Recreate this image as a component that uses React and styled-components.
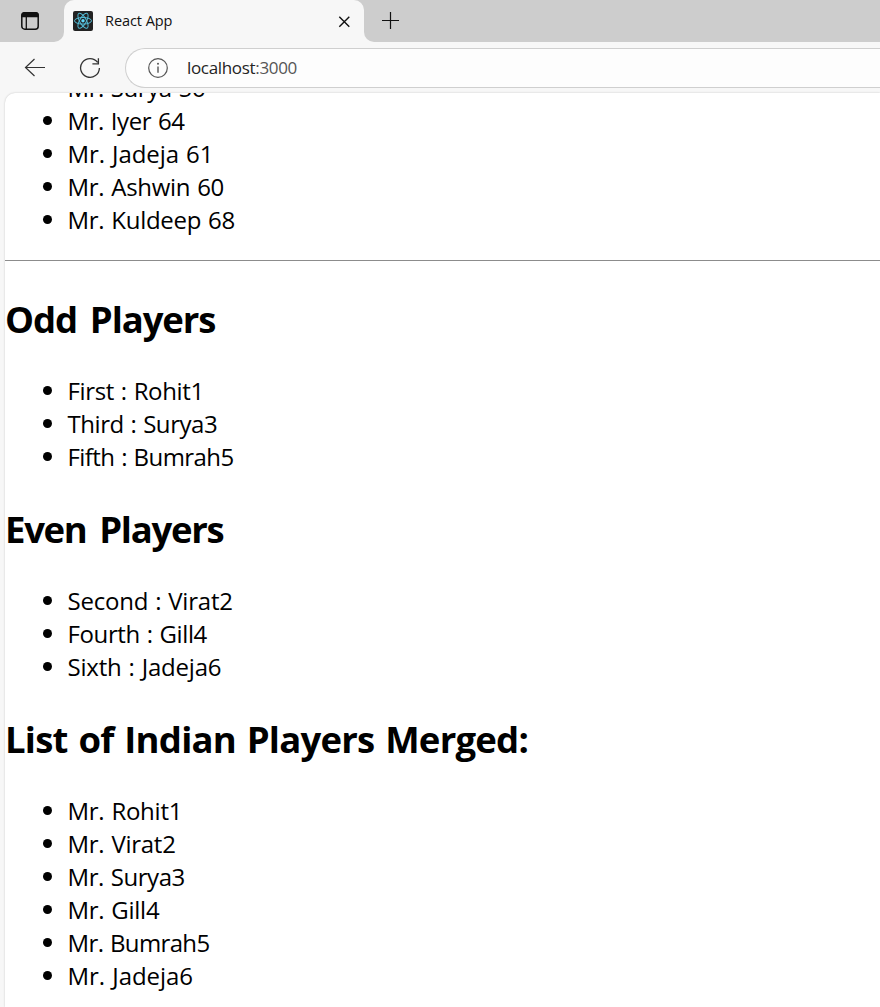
import React from 'react';
import styled, { createGlobalStyle } from 'styled-components';

const GlobalStyle = createGlobalStyle`
  * { box-sizing: border-box; }
  html, body { margin: 0; background: #f7f7f7; }
  body { font-family: "Open Sans", "Noto Sans", sans-serif; color: #000; overflow: hidden; }
`;

const Window = styled.div`
  display: flex;
  flex-direction: column;
  height: 1007px;
  background: #f7f7f7;
  overflow: hidden;
`;

const TabStrip = styled.header`
  display: flex;
  height: 42px;
  flex: none;
`;

const StripStart = styled.div`
  width: 64px;
  padding: 11px 0 0 20px;
  background: #cdcdcd;
  border-bottom-right-radius: 10px;
`;

const TabSlot = styled.div`
  width: 300px;
  background: linear-gradient(#cdcdcd 50%, #f7f7f7 50%);
`;

const Tab = styled.div`
  display: flex;
  align-items: center;
  height: 42px;
  padding: 0 13px 0 9px;
  background: #f7f7f7;
  border-radius: 10px 10px 0 0;
`;

const TabTitle = styled.span`
  flex: 1;
  margin-left: 12px;
  font-size: 14.5px;
  line-height: 20px;
  letter-spacing: -0.06px;
  color: #111;
`;

const StripEnd = styled.div`
  flex: 1;
  padding: 11px 0 0 17px;
  background: #cdcdcd;
  border-bottom-left-radius: 10px;
`;

const Toolbar = styled.nav`
  display: flex;
  align-items: flex-start;
  height: 51px;
  flex: none;
  padding: 6px 0 0 24px;
`;

const ToolIcon = styled.span`
  display: flex;
  width: 22px;
  height: 40px;
  align-items: center;
  margin-right: ${(p) => p.$gap}px;
`;

const AddressBar = styled.div`
  display: flex;
  align-items: center;
  flex: 1;
  height: 40px;
  padding-left: 21px;
  background: #fdfdfd;
  border: 1px solid #cfcfcf;
  border-right: 0;
  border-radius: 20px 0 0 20px;
`;

const Url = styled.span`
  margin-left: 18px;
  font-size: 17px;
  line-height: 24px;
  letter-spacing: -0.33px;
  color: #242424;
`;

const Port = styled.span`
  color: #555;
`;

const Page = styled.main`
  flex: 1;
  min-height: 0;
  margin-left: 5px;
  background: #fff;
  border-radius: 10px 0 0 0;
  box-shadow: 0 0 2px rgba(0, 0, 0, 0.22);
  overflow: hidden;
`;

const PlayerList = styled.ul`
  margin: ${(p) => (p.$scrolled ? '-22px' : '0')} 0 0;
  padding: 0 0 0 38px;
  list-style: none;
`;

const Player = styled.li`
  display: flex;
  align-items: center;
  height: 33px;
  font-size: 24px;
  line-height: 33px;
  letter-spacing: ${(p) => p.$spacing}px;
  word-spacing: 1px;
  white-space: pre;

  &::before {
    content: '';
    width: 9px;
    height: 9px;
    margin-right: 15.5px;
    border-radius: 50%;
    background: #000;
  }
`;

const Divider = styled.hr`
  height: 1px;
  margin: 24px 0 32px;
  border: 0;
  background: #8c8c8c;
`;

const Heading = styled.h2`
  margin: ${(p) => p.$top}px 0 30px;
  padding-top: 1px;
  font-size: 36.5px;
  font-weight: 700;
  line-height: 50px;
  letter-spacing: ${(p) => p.$spacing}px;
  word-spacing: ${(p) => p.$wordSpacing}px;
  white-space: nowrap;
`;

const TabActionsIcon = () => (
  <svg width="20" height="20" viewBox="0 0 20 20" display="block">
    <rect x="1.8" y="1.8" width="16.4" height="16.4" rx="3" fill="none" stroke="#111" strokeWidth="1.5" />
    <path d="M1.2 6.2V4.4a3.3 3.3 0 0 1 3.3-3.3h11a3.3 3.3 0 0 1 3.3 3.3v1.8z" fill="#111" />
    <path d="M6.3 6v12" stroke="#111" strokeWidth="1.3" />
  </svg>
);

const ReactLogo = () => (
  <svg width="20" height="20" viewBox="0 0 20 20">
    <rect width="20" height="20" rx="2" fill="#222" />
    <g fill="none" stroke="#53bcd6" strokeWidth="1">
      <ellipse cx="10" cy="9.8" rx="8.5" ry="3.3" />
      <ellipse cx="10" cy="9.8" rx="8.5" ry="3.3" transform="rotate(60 10 9.8)" />
      <ellipse cx="10" cy="9.8" rx="8.5" ry="3.3" transform="rotate(120 10 9.8)" />
    </g>
    <circle cx="10" cy="9.8" r="1.7" fill="#61dafb" />
  </svg>
);

const CloseIcon = () => (
  <svg width="14" height="14" viewBox="0 0 14 14">
    <path d="M2.3 2.7l10 10m0-10l-10 10" stroke="#111" strokeWidth="1.4" fill="none" />
  </svg>
);

const PlusIcon = () => (
  <svg width="20" height="20" viewBox="0 0 20 20" display="block">
    <path d="M1 9.5h17M9.5 1v17" stroke="#111" strokeWidth="1.2" fill="none" />
  </svg>
);

const BackIcon = () => (
  <svg width="22" height="22" viewBox="0 0 22 22">
    <path d="M21 10.5H1.5M10.5 2L1.5 10.5l9 8.5" stroke="#333" strokeWidth="1.2" fill="none" />
  </svg>
);

const RefreshIcon = () => (
  <svg width="22" height="22" viewBox="0 0 22 22">
    <path d="M20.4 11A9.4 9.4 0 1 1 18.6 5.4M19.4 1.2v5.6h-6" stroke="#333" strokeWidth="1.3" fill="none" />
  </svg>
);

const InfoIcon = () => (
  <svg width="22" height="22" viewBox="0 0 22 22">
    <circle cx="11" cy="11" r="9.3" fill="none" stroke="#555" strokeWidth="1.2" />
    <path d="M11 9.4v6.3" stroke="#555" strokeWidth="1.4" />
    <circle cx="11" cy="6.7" r="1" fill="#555" />
  </svg>
);

const runs = [
  ['Mr. Surya 56', -0.42],
  ['Mr. Iyer 64', -0.41],
  ['Mr. Jadeja 61', -0.08],
  ['Mr. Ashwin 60', -0.29],
  ['Mr. Kuldeep 68', -0.28],
];

const sections = [
  {
    title: 'Odd Players',
    spacing: -1.1,
    wordSpacing: 4.5,
    top: 0,
    players: [['First : Rohit1', -0.36], ['Third : Surya3', -0.45], ['Fifth : Bumrah5', -0.56]],
  },
  {
    title: 'Even Players',
    spacing: -1.3,
    wordSpacing: 4.5,
    top: 30,
    players: [['Second : Virat2', -0.22], ['Fourth : Gill4', -0.38], ['Sixth : Jadeja6', -0.2]],
  },
  {
    title: 'List of Indian Players Merged:',
    spacing: -0.77,
    wordSpacing: 2,
    top: 30,
    players: [
      ['Mr. Rohit1', -0.26],
      ['Mr. Virat2', -0.26],
      ['Mr. Surya3', -0.43],
      ['Mr. Gill4', -0.27],
      ['Mr. Bumrah5', -0.63],
      ['Mr. Jadeja6', -0.05],
    ],
  },
];

const Players = ({ items, scrolled }) => (
  <PlayerList $scrolled={scrolled}>
    {items.map(([name, spacing]) => (
      <Player key={name} $spacing={spacing}>{name}</Player>
    ))}
  </PlayerList>
);

export default function App() {
  return (
    <Window>
      <GlobalStyle />
      <TabStrip>
        <StripStart><TabActionsIcon /></StripStart>
        <TabSlot>
          <Tab>
            <ReactLogo />
            <TabTitle>React App</TabTitle>
            <CloseIcon />
          </Tab>
        </TabSlot>
        <StripEnd><PlusIcon /></StripEnd>
      </TabStrip>
      <Toolbar>
        <ToolIcon $gap={33}><BackIcon /></ToolIcon>
        <ToolIcon $gap={24}><RefreshIcon /></ToolIcon>
        <AddressBar>
          <InfoIcon />
          <Url>localhost<Port>:3000</Port></Url>
        </AddressBar>
      </Toolbar>
      <Page>
        <Players items={runs} scrolled />
        <Divider />
        {sections.map((s) => (
          <React.Fragment key={s.title}>
            <Heading $spacing={s.spacing} $wordSpacing={s.wordSpacing} $top={s.top}>
              {s.title}
            </Heading>
            <Players items={s.players} />
          </React.Fragment>
        ))}
      </Page>
    </Window>
  );
}
